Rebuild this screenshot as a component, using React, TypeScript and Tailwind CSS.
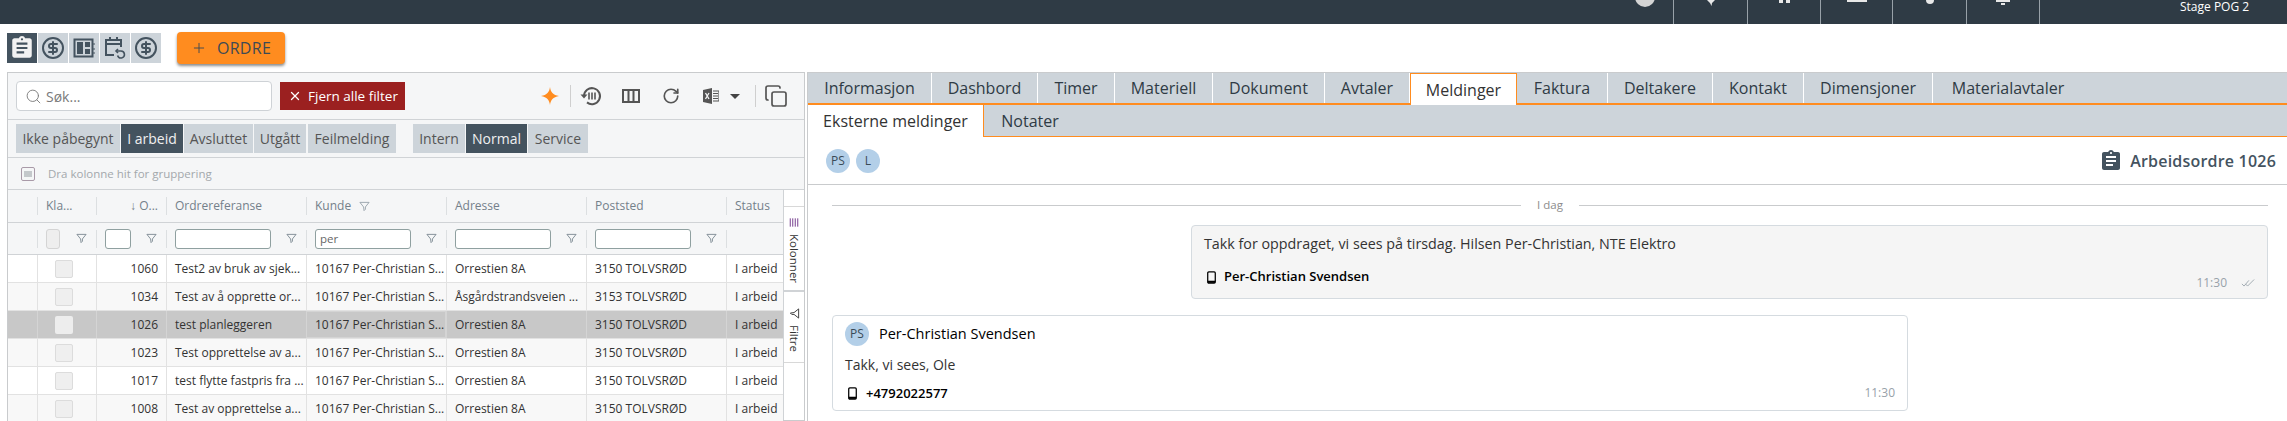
import React from 'react';
import { Search, X, Plus, CircleDollarSign, RotateCw, Copy } from 'lucide-react';
import { MdAssignment } from 'react-icons/md';

const mainTabs = [
  { label: 'Informasjon', w: 'w-[124px]' },
  { label: 'Dashbord', w: 'w-[106px]' },
  { label: 'Timer', w: 'w-[77px]' },
  { label: 'Materiell', w: 'w-[98px]' },
  { label: 'Dokument', w: 'w-[112px]' },
  { label: 'Avtaler', w: 'w-[85px]' },
  { label: 'Meldinger', w: 'w-[107px]', active: true },
  { label: 'Faktura', w: 'w-[91px]' },
  { label: 'Deltakere', w: 'w-[105px]' },
  { label: 'Kontakt', w: 'w-[91px]' },
  { label: 'Dimensjoner', w: 'w-[129px]' },
  { label: 'Materialavtaler', w: 'w-[150px]' },
];

const rows = [
  { id: '1060', ref: 'Test2 av bruk av sjek...', addr: 'Orrestien 8A', post: '3150 TOLVSRØD' },
  { id: '1034', ref: 'Test av å opprette or...', addr: 'Åsgårdstrandsveien ...', post: '3153 TOLVSRØD' },
  { id: '1026', ref: 'test planleggeren', addr: 'Orrestien 8A', post: '3150 TOLVSRØD', selected: true },
  { id: '1023', ref: 'Test opprettelse av a...', addr: 'Orrestien 8A', post: '3150 TOLVSRØD' },
  { id: '1017', ref: 'test flytte fastpris fra ...', addr: 'Orrestien 8A', post: '3150 TOLVSRØD' },
  { id: '1008', ref: 'Test av opprettelse a...', addr: 'Orrestien 8A', post: '3150 TOLVSRØD' },
];

function FunnelIcon({ className }: { className?: string }) {
  return (
    <svg viewBox="0 0 12 12" className={className} fill="none" stroke="currentColor" strokeWidth="1">
      <path d="M1 1.5h10L7 6.5v2.5L5.5 10.5 5 6.5z" strokeLinejoin="round" />
    </svg>
  );
}

function PhoneIcon() {
  return (
    <svg viewBox="0 0 10 14" className="w-[9px] h-[13px] text-black shrink-0" fill="none">
      <rect x="0.8" y="0.8" width="8.4" height="12.4" rx="1.2" stroke="currentColor" strokeWidth="1.4" />
      <rect x="1" y="10.6" width="8" height="2.4" fill="currentColor" />
    </svg>
  );
}

function Avatar({ text }: { text: string }) {
  return (
    <div className="w-6 h-6 rounded-full bg-[#b3cfe8] flex items-center justify-center text-[12px] font-normal tracking-normal text-[#3a4a56]">
      {text}
    </div>
  );
}

function TopBar() {
  return (
    <div className="h-6 bg-[#2f3b45] flex shrink-0 overflow-hidden">
      <div className="w-[1673px] flex justify-end pr-[18px]">
        <div className="w-5 h-5 -mt-[13px] rounded-full bg-[#d4d4d4]" />
      </div>
      <div className="w-[74px] border-l border-[#98a1a8] flex justify-center">
        <svg viewBox="0 0 10 6" className="w-[10px] h-[6px] text-[#e8e8e8]" fill="currentColor"><path d="M1 0h8L6 3 5.5 6 4 3z" /></svg>
      </div>
      <div className="w-[73px] border-l border-[#98a1a8] flex justify-center gap-[3px]">
        <div className="w-[4px] h-[3px] bg-[#e8e8e8]" />
        <div className="w-[4px] h-[3px] bg-[#e8e8e8]" />
      </div>
      <div className="w-[72px] border-l border-[#98a1a8] flex justify-center">
        <div className="w-[20px] h-[2px] bg-[#e8e8e8]" />
      </div>
      <div className="w-[74px] border-l border-[#98a1a8] flex justify-center">
        <div className="w-[8px] h-[4px] rounded-b bg-[#e8e8e8]" />
      </div>
      <div className="w-[73px] border-l border-[#98a1a8] flex flex-col items-center gap-[1px]">
        <div className="w-[14px] h-[2px] bg-[#e8e8e8]" />
        <div className="w-[4px] h-[2px] bg-[#e8e8e8]" />
      </div>
      <div className="flex-1 border-l border-[#98a1a8] pl-[140px] text-[12px] leading-[13px] text-white">Stage POG 2</div>
    </div>
  );
}

function QuiltIcon() {
  return (
    <svg viewBox="0 0 22 20" className="w-[22px] h-[20px] text-[#44535f]" fill="none">
      <rect x="1.5" y="1.5" width="18" height="17" stroke="currentColor" strokeWidth="2" />
      <rect x="4" y="4" width="6" height="12" fill="currentColor" />
      <rect x="12" y="4" width="5" height="5" fill="currentColor" />
      <rect x="12" y="11" width="5" height="5" fill="currentColor" />
      <path d="M21 5v2M21 10v2M21 14v2" stroke="currentColor" strokeWidth="1" />
    </svg>
  );
}

function CalendarUndoIcon() {
  return (
    <svg viewBox="0 0 22 24" className="w-[22px] h-[24px] text-[#44535f]" fill="none" stroke="currentColor" strokeWidth="2">
      <path d="M10 19H2V4h15v7" />
      <path d="M2 8h15M6 1v4M13 1v4" />
      <path d="M14 13l-2 2 2 2" strokeWidth="1.6" />
      <path d="M12.5 15H17a3.5 3.5 0 1 1-3.4 4.5" strokeWidth="1.6" />
    </svg>
  );
}

function Toolbar() {
  const tile = 'w-[30px] h-[30px] bg-[#cdd4da] flex items-center justify-center text-[#44535f]';
  return (
    <div className="h-12 flex items-start pl-[7px] pt-[9px] shrink-0">
      <div className="flex gap-px">
        <div className="w-[30px] h-[30px] bg-[#44535f] flex items-center justify-center text-[#f2f2f2]">
          <MdAssignment size={26} />
        </div>
        <div className={tile}><CircleDollarSign size={24} strokeWidth={2} /></div>
        <div className={tile}><QuiltIcon /></div>
        <div className={tile}><CalendarUndoIcon /></div>
        <div className={tile}><CircleDollarSign size={24} strokeWidth={2} /></div>
      </div>
      <button className="ml-4 -mt-px w-[108px] h-8 bg-[#ff8c1f] rounded-[4px] shadow-[0_2px_3px_rgba(0,0,0,0.45)] flex items-center justify-center gap-[10px] text-[#3d4a55] text-[16px] tracking-[0.3px]">
        <Plus size={16} strokeWidth={1.4} />
        ORDRE
      </button>
    </div>
  );
}

function HistoryColumnsIcon() {
  return (
    <svg viewBox="0 0 22 20" className="w-[22px] h-[20px] text-[#555]" fill="none" stroke="currentColor">
      <path d="M4 10a8 8 0 1 1 3 6.4" strokeWidth="2" />
      <path d="M0.5 8.5h7L4 12.5z" fill="currentColor" stroke="none" />
      <path d="M9 6.5v7M12 6.5v7M15 6.5v7" strokeWidth="1.6" />
    </svg>
  );
}

function ExcelIcon() {
  return (
    <svg viewBox="0 0 16 16" className="w-4 h-4 text-[#555]" fill="none">
      <path d="M0 2l9-2v16l-9-2z" fill="currentColor" />
      <path d="M2.5 5l3.5 6M6 5l-3.5 6" stroke="#f5f6f7" strokeWidth="1.3" />
      <path d="M10 3h6v10h-6M10 5.5h5M10 8h5M10 10.5h5" stroke="currentColor" strokeWidth="1.2" />
    </svg>
  );
}

function FilterBar() {
  return (
    <div className="h-[47px] border-b border-[#d0d3d6] flex items-center pl-2 shrink-0">
      <div className="w-[256px] h-[30px] bg-white border border-[#ced2d6] rounded-[4px] flex items-center pl-2 gap-1 text-[#7a7a7a] text-[14px]">
        <Search size={17} strokeWidth={1.3} />
        Søk...
      </div>
      <button className="ml-2 w-[125px] h-7 bg-[#9b2020] text-white text-[13.5px] flex items-center pl-[8px] gap-[6px]">
        <X size={14} strokeWidth={2.2} />
        Fjern alle filter
      </button>
      <div className="ml-[125px] w-[40px] flex justify-center text-[#ff8c1f]">
        <svg viewBox="0 0 18 18" className="w-[18px] h-[18px]" fill="currentColor"><path d="M9 0c.6 5 3 8 9 9-6 1-8.4 4-9 9-.6-5-3-8-9-9 6-1 8.4-4 9-9z" /></svg>
      </div>
      <div className="w-px h-[22px] bg-[#cfcfcf]" />
      <div className="w-[40px] flex justify-center"><HistoryColumnsIcon /></div>
      <div className="w-[40px] flex justify-center text-[#555]">
        <svg viewBox="0 0 18 14" className="w-[18px] h-[14px]" fill="none" stroke="currentColor" strokeWidth="2"><rect x="1" y="1" width="16" height="12" /><path d="M6.5 1v12M11.5 1v12" /></svg>
      </div>
      <div className="w-[40px] flex justify-center text-[#555]"><RotateCw size={18} strokeWidth={2.2} /></div>
      <div className="w-[40px] flex justify-center"><ExcelIcon /></div>
      <div className="w-0 h-0 -ml-px border-x-[5px] border-x-transparent border-t-[5px] border-t-[#444]" />
      <div className="ml-[15px] w-px h-[22px] bg-[#cfcfcf]" />
      <div className="w-[40px] flex justify-center text-[#555]"><Copy size={24} strokeWidth={1.7} /></div>
    </div>
  );
}

function StatusBar() {
  const btn = 'h-[29px] flex items-center justify-center text-[14px] bg-[#cdd4da] text-[#555]';
  const active = 'h-[29px] flex items-center justify-center text-[14px] bg-[#44535f] text-[#f0f0f0]';
  return (
    <div className="h-[38px] border-b border-[#d0d3d6] flex items-center pl-2 shrink-0 gap-px">
      <div className={`${btn} w-[104px]`}>Ikke påbegynt</div>
      <div className={`${active} w-[62px]`}>I arbeid</div>
      <div className={`${btn} w-[69px]`}>Avsluttet</div>
      <div className={`${btn} w-[52px]`}>Utgått</div>
      <div className={`${btn} w-[88px] ml-px`}>Feilmelding</div>
      <div className={`${btn} w-[52px] ml-4`}>Intern</div>
      <div className={`${active} w-[61px]`}>Normal</div>
      <div className={`${btn} w-[60px]`}>Service</div>
    </div>
  );
}

function GroupBar() {
  return (
    <div className="h-8 border-b border-[#d0d3d6] flex items-center pl-[13px] gap-[13px] text-[11.5px] text-[#a3a8ac] shrink-0">
      <div className="w-[14px] h-[14px] border border-[#a99aa8] rounded-[2px] flex items-center justify-center">
        <div className="w-[8px] h-[6px] bg-[#c4c8cb]" />
      </div>
      Dra kolonne hit for gruppering
    </div>
  );
}

function HeaderCell({ w, label, right, funnel }: { w: string; label?: string; right?: boolean; funnel?: boolean }) {
  return (
    <div className={`${w} flex items-center h-[18px] border-l border-[#dcdfe1] px-2 gap-2 ${right ? 'justify-end' : ''}`}>
      {label}
      {funnel && <FunnelIcon className="w-[11px] h-[11px] text-[#97a2aa]" />}
    </div>
  );
}

function FilterCell({ w, inputW, value, muted }: { w: string; inputW?: string; value?: string; muted?: boolean }) {
  return (
    <div className={`${w} flex items-center h-[18px] border-l border-[#dcdfe1] pl-2 justify-between pr-[9px]`}>
      {inputW && (
        <div className={`${inputW} h-5 rounded-[3px] border flex items-center px-[4px] text-[11.5px] text-[#666] ${muted ? 'bg-[#eeeeee] border-[#d4d4d4]' : 'bg-white border-[#8fa0a0]'}`}>
          {value}
        </div>
      )}
      {inputW && <FunnelIcon className="w-[11px] h-[11px] text-[#7d8a93]" />}
    </div>
  );
}

function Grid() {
  return (
    <div className="flex-1 flex min-h-0">
      <div className="flex-1 flex flex-col">
        <div className="h-[33px] border-b border-[#d0d3d6] flex items-center pl-[29px] text-[12px] text-[#74808a] shrink-0">
          <HeaderCell w="w-[59px]" label="Kla..." />
          <HeaderCell w="w-[70px]" label="↓ O..." right />
          <HeaderCell w="w-[140px]" label="Ordrereferanse" />
          <HeaderCell w="w-[140px]" label="Kunde" funnel />
          <HeaderCell w="w-[140px]" label="Adresse" />
          <HeaderCell w="w-[140px]" label="Poststed" />
          <HeaderCell w="w-[57px]" label="Status" />
        </div>
        <div className="h-8 border-b border-[#d0d3d6] flex items-center pl-[29px] shrink-0">
          <FilterCell w="w-[59px]" inputW="w-[14px]" muted />
          <FilterCell w="w-[70px]" inputW="w-[26px]" />
          <FilterCell w="w-[140px]" inputW="w-[96px]" />
          <FilterCell w="w-[140px]" inputW="w-[96px]" value="per" />
          <FilterCell w="w-[140px]" inputW="w-[96px]" />
          <FilterCell w="w-[140px]" inputW="w-[96px]" />
          <FilterCell w="w-[57px]" />
        </div>
        {rows.map((r, i) => {
          const bg = r.selected ? 'bg-[#c8c8c8]' : i % 2 === 0 ? 'bg-white' : 'bg-[#f8f8f8]';
          const line = r.selected ? 'border-[#d4d4d4]' : 'border-[#e2e2e2]';
          const cell = `flex items-center border-l ${line} px-[8px] whitespace-nowrap overflow-hidden`;
          return (
            <div key={r.id} className={`h-7 shrink-0 flex pl-[29px] border-b border-[#e2e2e2] text-[12px] text-[#333] ${bg}`}>
              <div className={`${cell} w-[59px]`}>
                <div className={`ml-[9px] w-[18px] h-[18px] rounded-[2px] ${r.selected ? 'bg-[#ededed]' : 'bg-[#efefef] border border-[#dcdcdc]'}`} />
              </div>
              <div className={`${cell} w-[70px] justify-end`}>{r.id}</div>
              <div className={`${cell} w-[140px]`}>{r.ref}</div>
              <div className={`${cell} w-[140px] ${r.selected ? 'border border-[#8a8a8a]' : ''}`}>10167 Per-Christian S...</div>
              <div className={`${cell} w-[140px]`}>{r.addr}</div>
              <div className={`${cell} w-[140px]`}>{r.post}</div>
              <div className={`${cell} w-[57px]`}>I arbeid</div>
            </div>
          );
        })}
      </div>
      <div className="w-[21px] bg-white border-l border-[#d0d3d6] flex flex-col text-[11.5px] text-[#333] shrink-0">
        <div className="h-[17px] border-b border-[#d8d8d8]" />
        <div className="h-[85px] border-b-2 border-[#d0d3d6] flex flex-col items-center pt-[11px] gap-[7px]">
          <svg viewBox="0 0 12 10" className="w-[10px] h-[9px] text-[#5c1a78]" fill="none" stroke="currentColor"><path d="M1.5 0v10M4.5 0v10M7.5 0v10M10.5 0v10" /></svg>
          <span className="[writing-mode:vertical-rl] leading-none">Kolonner</span>
        </div>
        <div className="h-[71px] border-b border-[#d8d8d8] flex flex-col items-center pt-[16px] gap-[6px]">
          <FunnelIcon className="w-[11px] h-[11px] rotate-90 text-[#333]" />
          <span className="[writing-mode:vertical-rl] leading-none">Filtre</span>
        </div>
      </div>
    </div>
  );
}

function LeftPanel() {
  return (
    <div className="w-[798px] border border-[#c9cbcd] bg-[#f5f6f7] flex flex-col shrink-0">
      <FilterBar />
      <StatusBar />
      <GroupBar />
      <Grid />
    </div>
  );
}

function MainTabs() {
  return (
    <div className="h-[32px] bg-[#cdd4da] border-b-2 border-[#ff8c1f] flex shrink-0">
      {mainTabs.map((t) =>
        t.active ? (
          <div key={t.label} className={`${t.w} h-[32px] bg-white border border-b-0 border-[#ff8c1f] flex items-center justify-center text-[16px] text-[#333]`}>
            {t.label}
          </div>
        ) : (
          <div key={t.label} className={`${t.w} h-[30px] border-r border-white flex items-center justify-center text-[16px] text-[#2f3b45] last:border-r-0`}>
            {t.label}
          </div>
        )
      )}
    </div>
  );
}

function SubTabs() {
  return (
    <div className="h-[32px] bg-[#cdd4da] border-b border-[#ff8c1f] flex shrink-0 text-[16px]">
      <div className="w-[176px] h-[32px] bg-white border-r border-[#ff8c1f] flex items-center justify-center text-[#333]">Eksterne meldinger</div>
      <div className="w-[92px] flex items-center justify-center text-[#2f3b45]">Notater</div>
    </div>
  );
}

function MessageArea() {
  return (
    <div className="pl-6 pr-[19px] text-[#333]">
      <div className="flex items-center gap-4 text-[11.5px] text-[#8c8c8c] h-[40px]">
        <div className="flex-1 h-px bg-[#c9cbcd]" />
        I dag
        <div className="flex-1 h-px bg-[#c9cbcd]" />
      </div>
      <div className="ml-[359px] h-[74px] bg-[#f5f5f5] border border-[#d5dbe0] rounded-[4px] px-3 pt-[7px] relative text-[14.3px] mb-4">
        <div>Takk for oppdraget, vi sees på tirsdag. Hilsen Per-Christian, NTE Elektro</div>
        <div className="flex items-center gap-[8px] ml-[3px] mt-[13px] text-[13px] font-semibold text-black">
          <PhoneIcon />
          Per-Christian Svendsen
        </div>
        <div className="absolute right-[12px] bottom-[6px] flex items-center gap-[14px] text-[12px] text-[#98a2aa]">
          11:30
          <svg viewBox="0 0 16 10" className="w-[14px] h-[10px]" fill="none" stroke="currentColor" strokeWidth="1"><path d="M1 6l2.5 2.5L9 2M5 6l2.5 2.5L15 1" /></svg>
        </div>
      </div>
      <div className="w-[1076px] h-[96px] bg-white border border-[#d5dbe0] rounded-[4px] px-3 pt-[6px] relative">
        <div className="flex items-center gap-[10px] text-[14.5px] font-medium text-black">
          <Avatar text="PS" />
          Per-Christian Svendsen
        </div>
        <div className="text-[14px] mt-[9px] leading-[20px]">Takk, vi sees, Ole</div>
        <div className="flex items-center gap-[9px] ml-[3px] mt-[9px] text-[13px] font-semibold text-black">
          <PhoneIcon />
          +4792022577
        </div>
        <div className="absolute right-[12px] bottom-[8px] text-[12px] text-[#98a2aa]">11:30</div>
      </div>
    </div>
  );
}

function RightPanel() {
  return (
    <div className="flex-1 border-l border-t border-[#c9cbcd] flex flex-col ml-[2px]">
      <MainTabs />
      <SubTabs />
      <div className="h-[48px] border-b border-[#c9cbcd] flex items-center justify-between pl-[18px] pr-[11px] shrink-0">
        <div className="flex gap-[6px]">
          <Avatar text="PS" />
          <Avatar text="L" />
        </div>
        <div className="flex items-center gap-[7px] text-[16px] font-semibold text-[#44535f] tracking-[0.2px]">
          <MdAssignment size={24} />
          Arbeidsordre 1026
        </div>
      </div>
      <MessageArea />
    </div>
  );
}

export default function App() {
  return (
    <div className="w-[2287px] h-[421px] overflow-hidden bg-white flex flex-col font-['Open_Sans',sans-serif]">
      <TopBar />
      <Toolbar />
      <div className="flex-1 flex pl-[7px] min-h-0">
        <LeftPanel />
        <RightPanel />
      </div>
    </div>
  );
}
